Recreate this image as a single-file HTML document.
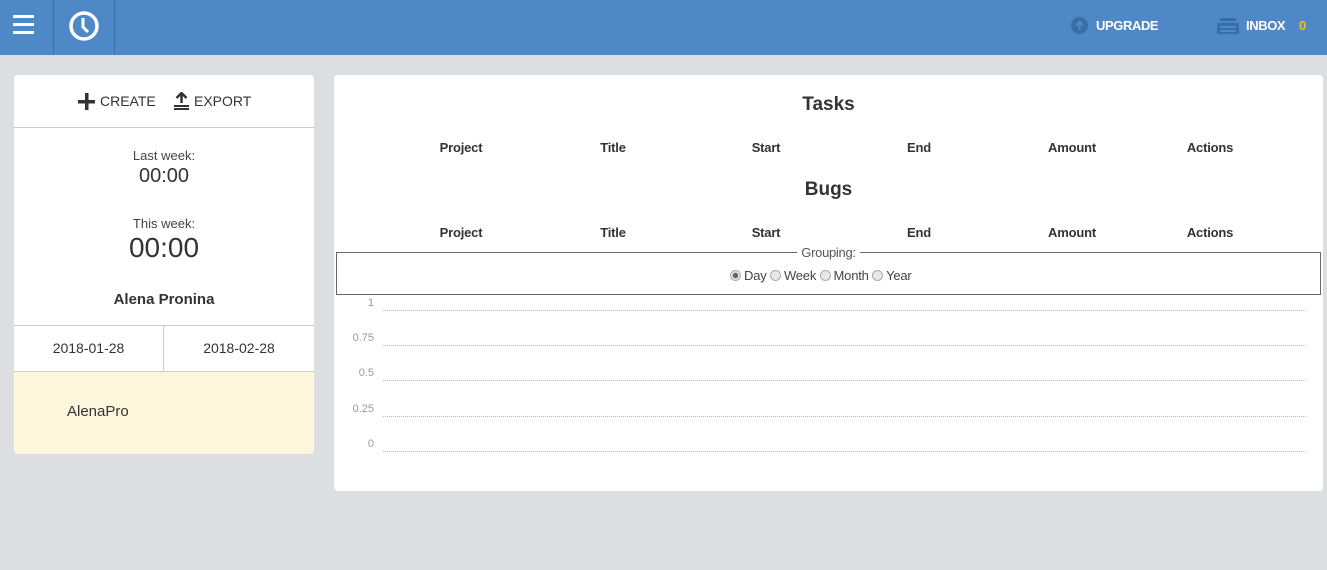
<!DOCTYPE html>
<html><head><style>
*{box-sizing:border-box;margin:0;padding:0}
body{width:1327px;height:570px;background:#dcdfe2;font-family:"Liberation Sans",sans-serif;color:#333;position:relative;overflow:hidden}
.top{position:absolute;left:0;top:0;width:1327px;height:55px;background:#4f88c6}
.abs{position:absolute}
.card{position:absolute;background:#fff;border-radius:4px}
.c{text-align:center}
.dl{position:absolute;left:383px;width:923px;border-top:1px dotted #bbb}
.yl{position:absolute;width:40px;text-align:right;font-size:11px;color:#999;left:334px}
.r{display:inline-block;width:11px;height:11px;border-radius:50%;border:1px solid #aaa;background:#e8e8e8;vertical-align:-1px;margin-right:3px}
.h{font-size:13px;font-weight:bold;letter-spacing:-.2px}
</style></head><body>
<div class="top">
 <div class="abs" style="left:13px;top:15px;width:21px">
  <div style="height:3px;background:#fff;margin-bottom:5px"></div><div style="height:3px;background:#fff;margin-bottom:5px"></div><div style="height:3px;background:#fff"></div></div>
 <div class="abs" style="left:53px;top:0;width:1px;height:55px;background:#3d6fa8"></div>
 <div class="abs" style="left:114px;top:0;width:1px;height:55px;background:#3d6fa8"></div>
 <svg class="abs" style="left:68px;top:10px" width="32" height="32" viewBox="0 0 32 32"><circle cx="16" cy="16" r="13" fill="none" stroke="#fff" stroke-width="3.5"/><path d="M15 8v9l5 5" fill="none" stroke="#fff" stroke-width="3"/></svg>
 <svg class="abs" style="left:1071px;top:17px" width="17" height="17"><circle cx="8.5" cy="8.5" r="8.5" fill="#3a6ea8"/><path d="M8.5 13V5M5 8.5l3.5-3.5 3.5 3.5" stroke="#4f88c6" stroke-width="2" fill="none"/></svg>
 <div class="abs" style="left:1096px;top:18px;color:#fff;font-weight:bold;font-size:13px;letter-spacing:-.4px">UPGRADE</div>
 <svg class="abs" style="left:1217px;top:18px" width="22" height="16"><rect x="0" y="5" width="22" height="11" fill="#3a6ea8"/><rect x="3" y="0" width="16" height="3" fill="#3a6ea8"/><rect x="3" y="8" width="16" height="2" fill="#4f88c6"/><rect x="3" y="12" width="16" height="2" fill="#4f88c6"/></svg>
 <div class="abs" style="left:1246px;top:18px;color:#fff;font-weight:bold;font-size:13px;letter-spacing:-.4px">INBOX</div>
 <div class="abs" style="left:1299px;top:18px;color:#f0c419;font-weight:bold;font-size:13px">0</div>
</div>

<div class="card" style="left:14px;top:75px;width:300px;height:379px;overflow:hidden">
 <svg class="abs" style="left:64px;top:18px" width="17" height="17"><rect x="7" y="0" width="3.5" height="17" fill="#333"/><rect x="0" y="7" width="17" height="3.5" fill="#333"/></svg>
 <div class="abs" style="left:86px;top:18px;font-size:14px;color:#333">CREATE</div>
 <svg class="abs" style="left:160px;top:17px" width="15" height="18"><path d="M7.5 1v10M2.5 6l5-5 5 5" stroke="#333" stroke-width="2.5" fill="none"/><rect x="0" y="13" width="15" height="2" fill="#333"/><rect x="0" y="16" width="15" height="2" fill="#333"/></svg>
 <div class="abs" style="left:180px;top:18px;font-size:14px;color:#333">EXPORT</div>
 <div class="abs" style="left:0;top:52px;width:300px;border-top:1px solid #ccc"></div>
 <div class="abs c" style="left:0;top:73px;width:300px;font-size:13px;color:#444">Last week:</div>
 <div class="abs c" style="left:0;top:90px;width:300px;font-size:20px;color:#333">00:00</div>
 <div class="abs c" style="left:0;top:141px;width:300px;font-size:13px;color:#444">This week:</div>
 <div class="abs c" style="left:0;top:157px;width:300px;font-size:28px;color:#333">00:00</div>
 <div class="abs c" style="left:0;top:216px;width:300px;font-size:15px;font-weight:bold;color:#333">Alena Pronina</div>
 <div class="abs" style="left:0;top:250px;width:300px;border-top:1px solid #ccc"></div>
 <div class="abs" style="left:149px;top:250px;height:46px;border-left:1px solid #ccc"></div>
 <div class="abs c" style="left:0;top:265px;width:149px;font-size:14px">2018-01-28</div>
 <div class="abs c" style="left:150px;top:265px;width:150px;font-size:14px">2018-02-28</div>
 <div class="abs" style="left:0;top:296px;width:300px;height:83px;background:#fdf6dc;border-top:1px solid #ccc"></div>
 <div class="abs" style="left:53px;top:328px;font-size:15px;color:#333">AlenaPro</div>
</div>

<div class="card" style="left:334px;top:75px;width:989px;height:416px"></div>
<div class="abs c" style="left:334px;top:94px;width:989px;font-size:19px;font-weight:bold;color:#333">Tasks</div>
<div class="abs c" style="left:334px;top:179px;width:989px;font-size:19px;font-weight:bold;color:#333">Bugs</div>
<div class="abs h" style="top:140px;left:0">
 <span class="abs c" style="left:411px;width:100px">Project</span><span class="abs c" style="left:563px;width:100px">Title</span><span class="abs c" style="left:716px;width:100px">Start</span><span class="abs c" style="left:869px;width:100px">End</span><span class="abs c" style="left:1022px;width:100px">Amount</span><span class="abs c" style="left:1160px;width:100px">Actions</span></div>
<div class="abs h" style="top:225px;left:0">
 <span class="abs c" style="left:411px;width:100px">Project</span><span class="abs c" style="left:563px;width:100px">Title</span><span class="abs c" style="left:716px;width:100px">Start</span><span class="abs c" style="left:869px;width:100px">End</span><span class="abs c" style="left:1022px;width:100px">Amount</span><span class="abs c" style="left:1160px;width:100px">Actions</span></div>
<div class="abs" style="left:336px;top:252px;width:985px;height:43px;border:1px solid #666"></div>
<div class="abs c" style="left:797px;top:245px;width:63px;background:#fff;font-size:13px;color:#555;letter-spacing:-.3px">Grouping:</div>
<div class="abs" style="left:730px;top:268px;font-size:13px;color:#444;letter-spacing:-.2px"><span class="r" style="background:radial-gradient(circle,#666 2.5px,#e8e8e8 3px)"></span>Day <span class="r"></span>Week <span class="r"></span>Month <span class="r"></span>Year</div>
<div class="yl" style="top:297px">1</div><div class="dl" style="top:310px"></div>
<div class="yl" style="top:332px">0.75</div><div class="dl" style="top:345px"></div>
<div class="yl" style="top:367px">0.5</div><div class="dl" style="top:380px"></div>
<div class="yl" style="top:403px">0.25</div><div class="dl" style="top:416px"></div>
<div class="yl" style="top:438px">0</div><div class="dl" style="top:451px"></div>
</body></html>
